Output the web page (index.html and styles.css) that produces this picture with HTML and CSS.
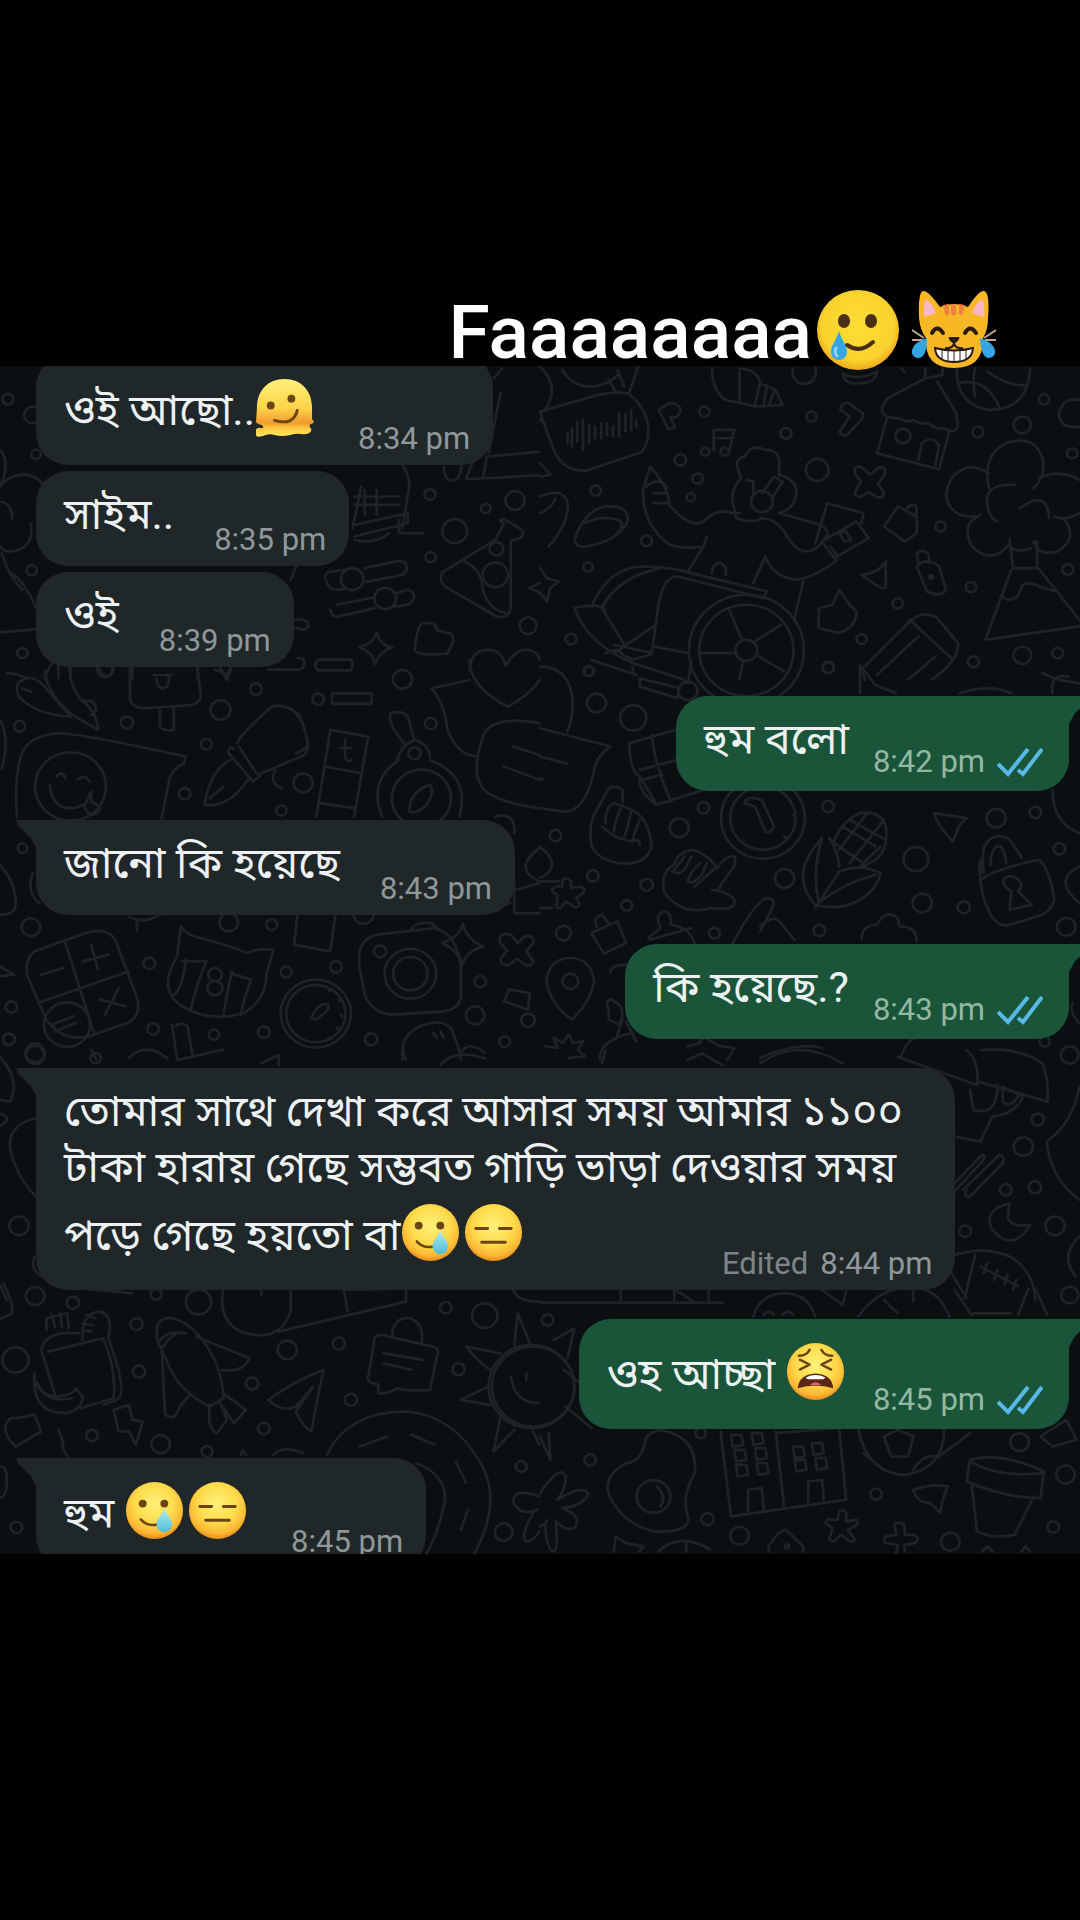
FILE: index.html
```
<!DOCTYPE html>
<html lang="bn">
	<head>
		<meta charset="utf-8">
		<meta name="viewport" content="width=device-width, initial-scale=1">
		<title>Chat</title>
		<link rel="stylesheet" href="styles.css">
	</head>
	<body>
		<!-- Shared emoji and icons -->
		<svg class="defs" aria-hidden="true">
			<defs>
				<radialGradient id="face" cx="50%" cy="38%" r="62%">
					<stop offset="0" stop-color="#fff27a"/>
					<stop offset=".55" stop-color="#fedb4b"/>
					<stop offset=".85" stop-color="#fbb733"/>
					<stop offset="1" stop-color="#e88a1c"/>
				</radialGradient>
				<radialGradient id="flatFace" cx="50%" cy="45%" r="55%">
					<stop offset="0" stop-color="#fdde36"/>
					<stop offset=".8" stop-color="#fad22e"/>
					<stop offset="1" stop-color="#f0a81c"/>
				</radialGradient>
				<linearGradient id="drop" x1="0" y1="0" x2="0" y2="1">
					<stop offset="0" stop-color="#b4ecee"/>
					<stop offset="1" stop-color="#4fbcd8"/>
				</linearGradient>
				<linearGradient id="melt" x1="0" y1="0" x2="0" y2="1">
					<stop offset="0" stop-color="#fff07c"/>
					<stop offset=".5" stop-color="#fdd548"/>
					<stop offset=".76" stop-color="#f29a2e"/>
					<stop offset=".84" stop-color="#fbc53c"/>
					<stop offset="1" stop-color="#ffe861"/>
				</linearGradient>
				<symbol id="tear" viewBox="0 0 60 60">
					<circle cx="30" cy="30" r="29" fill="url(#face)"/>
					<ellipse cx="18" cy="23" rx="4" ry="4" fill="#6b4516"/>
					<ellipse cx="40" cy="23" rx="4" ry="4" fill="#6b4516"/>
					<path d="M16 39Q23 47 34 44" fill="none" stroke="#6b4516" stroke-width="2.5" stroke-linecap="round"/>
					<path d="M40 28C37 35 32 39 32 44a8 8 0 0 0 16 0C48 39 43 35 40 28Z" fill="url(#drop)"/>
				</symbol>
				<symbol id="blank" viewBox="0 0 60 60">
					<circle cx="30" cy="30" r="29" fill="url(#face)"/>
					<path d="M12 26H24M36 26H48M18 40H42" stroke="#6b4516" stroke-width="3" stroke-linecap="round"/>
				</symbol>
				<symbol id="melting" viewBox="0 0 60 60">
					<path d="M2 30C2 13 13 1 30 1s28 12 28 29v12q3 2 1 4-5 1-3 4 2 2 1 4-2 4-10 3-5-1-11 1-9 2-16 0-6-2-12 1-7 2-7-1v-6q3-2 6-1 3-1 0-3-4-1-6-3Z" fill="url(#melt)"/>
					<circle cx="16" cy="28" r="4" fill="#6b4516"/>
					<circle cx="37" cy="21" r="4" fill="#6b4516"/>
					<path d="M20 43Q39 49 43 33" fill="none" stroke="#6b4516" stroke-width="3" stroke-linecap="round"/>
				</symbol>
				<symbol id="tired" viewBox="0 0 60 60">
					<circle cx="30" cy="30" r="29" fill="url(#face)"/>
					<path d="M13 14Q21 14 24 8M36 8Q39 14 47 14M14 18L24 23L14 28M46 18L36 23L46 28" fill="none" stroke="#6b4516" stroke-width="2.5" stroke-linecap="round" stroke-linejoin="round"/>
					<path d="M12 47Q13 33 30 32Q47 33 48 47Q30 42 12 47Z" fill="#5b2713"/>
					<path d="M20 36Q30 31 40 36L38 38H22Z" fill="#fff"/>
					<path d="M24 44Q30 38 36 44Z" fill="#e8636b"/>
				</symbol>
				<symbol id="tearBig" viewBox="0 0 82 80">
					<ellipse cx="41" cy="40" rx="41" ry="40" fill="url(#flatFace)"/>
					<ellipse cx="27" cy="31" rx="6" ry="7" fill="#4a2f16"/>
					<ellipse cx="54" cy="31" rx="6" ry="7" fill="#4a2f16"/>
					<path d="M30 55Q43 64 56 52" fill="none" stroke="#4a2f16" stroke-width="4" stroke-linecap="round"/>
					<path d="M22 41C19 51 14 55 14 62a8 8 0 0 0 16 0C30 55 25 51 22 41Z" fill="#35a5e4"/>
					<path d="M19 58q-2 4 1 8" fill="none" stroke="#8fd2f5" stroke-width="3" stroke-linecap="round"/>
				</symbol>
				<symbol id="cat" viewBox="0 0 84 80">
					<path d="M14 48Q8 40 7 28Q6 2 11 1Q16 0 28 17Q42 11 56 17Q67 0 72 1Q78 2 76 28Q76 40 71 48Q72 78 42 78Q12 78 14 48Z" fill="#f8b826"/>
					<path d="M12 27Q11 14 14 9Q20 13 24 23ZM72 27Q73 14 70 9Q64 13 60 23Z" fill="#f9b5c9"/>
					<path d="M31 15l2 9q3 3 4 0V14ZM39 14v10q3 3 5 0V14ZM47 14v10q3 3 4 0l2-9Z" fill="#ee8140"/>
					<path d="M0 40l12 8M-1 50h12M84 40l-12 8M85 50H73" stroke="#b9a58c" stroke-width="2"/>
					<path d="M20 43q5-9 11 0M53 43q5-9 11 0" fill="none" stroke="#2b1a10" stroke-width="4" stroke-linecap="round"/>
					<path d="M37 47h10q2 2-5 7q-7-5-5-7Z" fill="#2b1a10"/>
					<path d="M42 53q-1 6-9 5M42 53q1 6 9 5" fill="none" stroke="#2b1a10" stroke-width="2"/>
					<path d="M23 58Q42 63 61 58Q60 72 42 72Q24 72 23 58Z" fill="#fff" stroke="#2b1a10" stroke-width="2"/>
					<path d="M30 60v9M36 61v10M42 61v11M48 61v10M54 60v9" stroke="#2b1a10" stroke-width="1"/>
					<path d="M15 48Q15 68 6 68Q-1 67 0 60Q2 52 15 48ZM68 48Q69 68 77 68Q84 67 83 60Q81 52 68 48Z" fill="#35a5e4"/>
				</symbol>
				<symbol id="ticks" viewBox="0 0 46 29">
					<path d="M1 16L11 26L31 1M21 22L26 26L45 1" fill="none" stroke="#58b9e6" stroke-width="4"/>
				</symbol>
			</defs>
		</svg>

		<header class="caption">
			<h1>Faaaaaaaa</h1>
			<svg class="big-emoji" role="img" aria-label="🥲"><use href="#tearBig"/></svg>
			<svg class="big-emoji" role="img" aria-label="😹"><use href="#cat"/></svg>
		</header>

		<main class="chat">
			<!-- Wallpaper doodles -->
			<svg class="wallpaper" viewBox="0 366 1080 1188" preserveAspectRatio="xMidYMin slice" aria-hidden="true">
				<g transform="translate(0 360) scale(.344 .333)">
					<path d="M0 270q20 20 15 60t-20 45M0 380q30-40 80-35 50 10 50 60M0 425q35 5 35 50M90 490q10 80-60 85-20 0-30-15M5 580q20 70 60 110M30 640q40 20 75 105M0 818l105-10M1170 315q20 30 20 65M1050 380l-25 125M1190 375l-20 130M1030 410h130M1030 435h130M1060 390v75M1095 390v75M1030 495l155-35v30l-155 40M1160 480v40h70M1030 540q60 15 100-20M1460 25l-25 30M1455 100l-35 180M1290 320q0 50 35 40 20-20 15-50M1420 290l148-15M1360 358l208-12M1355 355l20-50M1405 350l10-60M945 655q0-20 20-20l40-5M1060 625l100-22q25 0 22 25-3 15-25 20l-90 18M950 665q5 25 30 25l25-3M980 735l105-22M1150 700l35-10q22 5 18 25-3 15-20 20l-45 8M960 750q5 25 25 20l105-25M1440 540l25-50q-20-10 0-12l50 30q10 10 0 25l-30 10v200q-5 35-40 28l-150-90q-22-20-8-45ZM1350 605q50 20 55 90 20 60 70 65M1568 670l-30 15 30 12M1205 870q10-80 25-80 40-5 40 22l40 10q10 5 5 30l-15 30Q1210 890 1205 870ZM1045 863q40-10 50-45 10 40 45 45-35 10-50 50-5-35-45-50ZM780 930h90q15-5 15-20t-20-15M925 900h95q10 15 0 32h-95q-18-15 0-32ZM1365 930q5-60 55-60 40 0 50 50 25-50 60-50 38 5 38 30M860 780q40-5 35 20-5 15-35 5M865 610l-20 50M130 955q30-80 40-35v35M205 915v45M285 915q5 35 30 35 15-5 15-30M385 915v45M575 915v45M625 930l35 15 10-20"/>
					<circle cx="23" cy="117" r="16"/><circle cx="105" cy="283" r="14"/><circle cx="95" cy="165" r="25"/><circle cx="92" cy="632" r="15"/><circle cx="65" cy="880" r="15"/><circle cx="1250" cy="404" r="16"/><circle cx="1497" cy="422" r="28"/><circle cx="1412" cy="446" r="14"/><circle cx="1322" cy="514" r="36"/><circle cx="1252" cy="592" r="15"/><circle cx="1024" cy="658" r="33"/><circle cx="1120" cy="716" r="32"/><circle cx="1443" cy="567" r="20"/><circle cx="1440" cy="645" r="37"/><circle cx="1535" cy="798" r="25"/>
				</g>
				<g transform="translate(540 360) scale(.344 .333)">
					<!-- voice note, shell, key, notes -->
					<path d="M0 20q60 60 15 128M65 30q30 50 80 50t85-40M285 20l-25 78M200 60l20 35M225 30l20 50M0 155l160-48q60-15 100-5 55 50 55 110 0 40-20 65l-160 55q-60 5-90-50Q20 220 0 155M80 220v30M93 205v55M108 185v60M125 180v90M143 195v55M160 200v35M178 190v45M195 190v35M212 200v30M230 160v70M248 165v50M265 150v60M280 180v20M0 180l15 12M0 310l32 35-32 5M500 25q0 70 40 95l90 20 75-5-20-45-45-20q-5-40-60-45M580 35v95M640 65l-15 70M660 75l-10 60M680 95l-15 40M345 150l30-20q35 0 33 25-10 25-30 15l15 32-20 5ZM505 272v-62h60l-15 65M505 235h55M873 150q5-25 25-20l40 30q5 10-5 20l-40 45q-15 5-22-10l30-45ZM735 25q-5 45 35 47 35-5 32-50M880 40q40 25 100-5-5 35-50 35-45 5-50-30M1050 25l10 10"/>
					<!-- house, basketball, bush, volcano -->
					<path d="M1120 55l-110 60q-25 30-10 50 20 10 45 10 20 15 40 5 20 15 45 10 20 20 45 15 30 20 40-5l-5-40-55-95M1010 170l-30 110 180 48 30-115M1100 300l10-50q30-25 50 5l-10 60M1120 25v30l50-10v-20M1212 25q-5 110 95 125 110 0 118-125M1265 25q-10 40 0 85M1300 35q60 45 118 40M1215 70q80-20 120 70M1305 385q-20-100 50-135 90-30 108 55 5 50-30 80M1305 340q-60-40-105 10-45 75 20 115 40 10 60 0M1275 470q-50 20-22 85 55 65 110 0l15 15q30 5 50-5M1435 545q15 45 70 30 60-40 20-95M1450 355q60-30 118 5M1495 470q30 15 73-10M1380 375q-90-5-80 60 5 40 30 50M1395 445q80-60 85 30M1365 540l10 85h70v-80M1370 630l-75 210 273-40M1445 620l123 160M1340 710q45 30 60-30 10-15 40-5 20 10 60 20M1568 120q-50-10-60 45 10 45 60 35"/>
					<!-- person, laptop, rickshaw -->
					<path d="M575 330q-10-35 20-40 20-40 60-20 45 0 40 45v30q55 15 50 60-10 45-50 55M575 325l10 30q-30 30-25 70l10 50q40 15 70 5M600 360l20 5v40M645 400l35-50 25 15-30 50M320 320q60 70 55 115 70 80 105 45 35-35 80-20h20M320 320l-20 70q-5 100 75 165 50 15 100 5l10-30M475 560l-45 75M330 400h40M330 430h40M310 380q30-30 60 0M640 475q50 0 75 50 60 100 120 0 10-25-70-45l-70-20M655 590q20 60 90 70 50-5 120-60M655 590l-35 80M765 665l-25 110M800 550l35-120 105 30-5 30M820 545l100-60 35 50-100 60ZM845 560l20 30M870 520l20-5 15 25-20 5ZM100 745q90-20 90 15M150 740q50-120 150-120 80 0 140 20l220 55-10 20-250-65q-40 0-55 80l-20 150-110-25M180 745q40-90 170-120M180 745l65 110M100 745q40 110 170 165 60 20 150 50M215 880l115-80M190 880q35-20 50 5l30 15 50-15M330 860l100 20M500 640q0-30 25-30 20 10 15 35M550 750l35 85M700 795l-75 50M460 880h105M635 890l75 45M590 905l-10 55"/>
					<circle cx="645" cy="425" r="32"/><circle cx="600" cy="872" r="167"/><circle cx="600" cy="872" r="137"/><circle cx="600" cy="872" r="32"/>
					<!-- small shapes -->
					<path d="M915 325q15-12 30 5l15 15 20-20q30-10 22 20l-20 25 18 30q0 15-20 12l-25-15-25 15q-20-5-12-20l15-28-18-22ZM1000 500l40-60 55 30v50l-35 25ZM1065 455q0-20 25-20 10 10 0 35M935 645q50-5 70-40v80q-15 5-70-40ZM1095 620q30-30 65 0l20 70q-15 25-55 5ZM1100 610l-5-30q20-15 35 5v25M870 690l30 45 20 20q0 50-55 65l-55-15v-60l40-10ZM1080 780q40-30 75-5l60 75q5 50-75 110M1080 780l-145 150 10 30M1075 780l120 115M1100 830l-120 115M1150 890l-80 70M25 560q60-70 55-130-10-50-80-20M0 460q30-10 45-45M100 540q30-90 90-100 70-5 65 45-30 60-120 75-30 5-35-20ZM130 490q50-25 95-10 30 10-10 50M0 625l20 30 35 10-25 20-10 40-20-25"/>
					<circle cx="478" cy="155" r="15"/><circle cx="480" cy="275" r="12"/><circle cx="537" cy="275" r="12"/><circle cx="408" cy="300" r="17"/><circle cx="458" cy="356" r="15"/><circle cx="438" cy="412" r="12"/><circle cx="715" cy="220" r="16"/><circle cx="789" cy="170" r="15"/><circle cx="806" cy="330" r="33"/><circle cx="162" cy="392" r="15"/><circle cx="310" cy="543" r="16"/><circle cx="140" cy="622" r="14"/><circle cx="90" cy="838" r="16"/><circle cx="142" cy="935" r="14"/><circle cx="1055" cy="228" r="22"/><circle cx="1273" cy="216" r="16"/><circle cx="1402" cy="195" r="25"/><circle cx="1465" cy="118" r="15"/><circle cx="1547" cy="280" r="15"/><circle cx="1164" cy="500" r="15"/><circle cx="1137" cy="652" r="5"/><circle cx="1253" cy="682" r="15"/><circle cx="1040" cy="731" r="15"/><circle cx="935" cy="838" r="15"/><circle cx="838" cy="924" r="16"/><circle cx="1260" cy="906" r="16"/><circle cx="1402" cy="887" r="26"/><circle cx="1505" cy="880" r="16"/><circle cx="1534" cy="629" r="16"/>
				</g>
				<g transform="translate(0 660) scale(.344 .333)">
					<!-- carrot, ice cream, sticker, pen, ruler, watch -->
					<path d="M20 40q30 0 60 15 20-5 45 20l80 95q-100-5-150-60-20-45 25-55M65 85l25 10M130 35q10 70 80 130l75 45q-5-60-50-90l35 5q20 30-5 40M235 120q-40-60-30-105M378 20v100q10 25 40 25l140-10q30-10 25-35l-10-80M445 45h55M455 55q0 30 20 30 20-5 15-35M465 150v50q10 15 40 10v-65M640 25l20 35 10-30M50 470q-10-100 10-180 20-65 110-70 60 0 370 70l-5 20q-40 20-45 60l-20 105M145 375q5 70 60 70 20 0 35-10M165 350q15-20 25 5M225 360q20-20 35 5M265 395v30l25 15q0 25-30 25l-15-25ZM690 250q5-25 100-110 40-10 80 25 40 100 15 120l-135 60M695 260l50 80M830 140q30 10 40 35M890 240q20 20-30 40M665 280l70 85 20-15M665 280q-5-20 15-15M670 300q-60 30-75 135 70 10 125-75M610 415l40-35M800 330q-20 40 20 55M960 210l110 20-40 240M960 210l-40 260M945 320l105 20M930 430l100 15M990 265h30M1003 240v50q5 20 20 10M1175 250q-50-60-40-90 35-10 50 10l20 70M1155 300q10-45 50-60 40 10 45 50M1190 455q0-60 60-80 15 20-10 60-30 30-50 20ZM1160 300q-90 60-50 170M1250 300q120 50 85 170M1365 0q0 80 110 140 60-30 93-80M1365 60l-110 25q40 50 45 120 25 80 90 85M1568 190q-130-25-160 30-50 130 10 180 50 30 150 45M1490 260l78 25M1465 320l103 40M0 180q30 60 5 145M965 100h115v32H965ZM0 615q50 60 45 120 0 30-45 30M95 640q-20 60 20 90M865 760l-10 95 105 20 15-110M375 770q40 25 90-5M398 785v30M1445 755q-20-5 40-25M1440 470q60-15 55 50M1495 670v90h73M1500 690l68-20M1568 565q-80 60 0 100"/>
					<!-- calculator, cat cup, camera, stopwatch -->
					<path d="M80 950q-10-50 20-75l150-55q60-20 85 20l65 180q10 50-30 70l-110 40q-75 20-125-50ZM190 850l85 275M110 1030l265-95M120 945l65-20M240 905l75-20M265 855l20 75M290 1020l75 20M345 985l-40 80M150 1095l65-25M160 1115l60-25M525 800l-10 90q-60 100 15 150 80 50 180 20 65-40 65-120l20-70q-50-5-75 10-90-35-140-45-40-10-55-35ZM500 1010q30-15 40-110M530 905h70q-30 70-45 145M670 940l60 20q-20 50-30 105M650 1065q10-70 25-130M1045 920q-10-80 50-95l170-20q65 20 75 120v90q-10 35-50 40l-150 10q-60-5-80-60ZM1195 810q10-25 60-20l20 20M1285 850q55-20 60-60 10 50 60 70-50 15-60 55-10-40-60-65M905 1075q20-50 50-40 5 20-40 45ZM955 990l5 5M985 1020l5 5M990 1065l5 5M980 1105l5 5M955 1135l5 5M510 1100q15-15 35 0l15 90M500 1095l15 105M375 1195q50-50 110 0M520 1200l130-30M1180 1200q-30-60 40-100 60-25 90 5 20 40 30 95M1260 1120l10 15M1280 1115l10 20M1340 1180q20-40 70 0M1480 990l60 10-5 50-70-25ZM1455 830q20-15 35 0l15 20 20-20q30-5 25 20l-20 25 20 28q-5 20-25 12l-22-18-25 20q-25 0-22-20l18-25-22-25ZM0 920l40 25-40 5M265 1170l15 30"/>
					<circle cx="205" cy="380" r="103"/><circle cx="1225" cy="415" r="86"/><circle cx="1205" cy="280" r="18"/><circle cx="195" cy="1095" r="67"/><circle cx="625" cy="945" r="20"/><circle cx="625" cy="985" r="22"/><circle cx="1193" cy="942" r="75"/><circle cx="1193" cy="942" r="50"/><circle cx="1105" cy="875" r="18"/><circle cx="918" cy="1062" r="102"/><circle cx="918" cy="1062" r="86"/>
					<circle cx="57" cy="199" r="16"/><circle cx="305" cy="30" r="22"/><circle cx="369" cy="188" r="18"/><circle cx="641" cy="150" r="29"/><circle cx="744" cy="87" r="17"/><circle cx="600" cy="253" r="16"/><circle cx="537" cy="402" r="17"/><circle cx="881" cy="369" r="28"/><circle cx="925" cy="118" r="17"/><circle cx="1170" cy="58" r="28"/><circle cx="1252" cy="191" r="17"/><circle cx="818" cy="452" r="15"/><circle cx="65" cy="565" r="14"/><circle cx="90" cy="802" r="27"/><circle cx="434" cy="911" r="17"/><circle cx="665" cy="788" r="27"/><circle cx="790" cy="795" r="16"/><circle cx="832" cy="937" r="16"/><circle cx="977" cy="922" r="17"/><circle cx="1057" cy="762" r="30"/><circle cx="1396" cy="966" r="17"/><circle cx="1381" cy="1067" r="27"/><circle cx="1535" cy="1082" r="20"/><circle cx="1467" cy="1146" r="16"/><circle cx="1079" cy="1139" r="18"/><circle cx="767" cy="1118" r="17"/><circle cx="622" cy="1125" r="15"/><circle cx="445" cy="1108" r="17"/><circle cx="33" cy="1042" r="17"/><circle cx="26" cy="1139" r="17"/><circle cx="102" cy="1180" r="28"/>
				</g>
				<g transform="translate(540 660) scale(.344 .333)">
					<path d="M0 20q90 0 95 110 0 50-15 85M0 205l205 55q-45 30-50 80-25 120-90 115L0 445M0 290l80 22M0 355l10 2M150 0l130 45M290 55l115 30-5 30-110-35ZM270 20v20M440 0l-10 70M930 70v-55l45 60 60 25M930 100V40M1220 100q90-30 150 0M1460 40l50 20 58 10M1490 100q-10-60 45-50M260 250l150-45M260 250q0 80 30 100l50 85 135-45M325 225q10 90 30 120M290 330l110-30M300 360l50-15 30 80M290 350q-5 50 50 85"/>
					<!-- hands, clock, corn, lock -->
					<path d="M150 560q-10-60 10-100l40-75q20-10 40 5v35M190 490q0-50 25-60 20 5 50 20 50 20 60 110-20 60-95 50-60-10-80-50M180 500q40 40 90 45 20-10 20 10M265 450q-10 60-20 80M240 435q-20 40-25 80M290 480q-15 35-20 60M595 430q5-20 30-15l20 5 35 80q-5 20-25 15l-30-75ZM710 400l5 10M735 465h5M710 530l5 5M390 615q10-40 55-45 30 10 55 35l15 20q25-40 50-35 10 20-15 50l-30 45M390 615q-40 20-30 80 50 75 140 50 70 10 65-25-20-25-65-30M420 590q-20 30-35 45 25 15 40-15l15-30M465 610q-35 35-35 55 15 10 40-20l15-35M510 625q-40 35-60 55M820 535q-100 110-20 200 70 20 130-15 50-30 60-80-60-30-120-5l-70 110M820 535q-30 100-10 190M870 620q-5-50-30-85l15 10q20-60 75-85 60-10 75 40 10 70-30 100l-35 20M880 500l95 60M900 480l105 60M855 550l85 60M1000 480l-100 130M950 460l-80 110M990 560l-60 60M975 645q-90 25-160 80M1290 640q-5-50 0-75 20-50 70-30 25 30 40 60M1310 615q0-60 30-55 10 10 15 50M1280 660q50-35 170-60 30 20 45 120-10 40-50 50l-80 25q-30 10-55-30-40-80-30-165ZM1365 750l5-55q-30-20-20-40 25-15 45 10 10 15-5 30l40 40ZM1145 460l95 15-20 20-20 50q-40-40-55-85ZM1490 390q0 100 78 130M1568 620q-80 40 0 110"/>
					<!-- gloves, cloud, flowers, pins -->
					<path d="M0 560q70 60 0 95M0 665h55M0 745h35M65 660q15-10 25 5v20l25-5q20 5 10 20l-20 15 10 20q-10 15-25 0l-15-10-15 20q-20 0-10-20v-20l-15-10q0-15 20-15h10ZM150 820l75-35 25 65-65 32ZM165 800q-10-30 15-35l20 25M315 835l35-30q-20-45 15-50 20 10 15 40 60 10 70 60M320 840l120-35M560 850q70-130 100-135 35 0 5 50l-25 50M640 800q40-40 60-10l40 50M935 840q0-45 45-45 25-50 60-20l5 25q50 0 50 45M18 965q10-70 70-70t70 70q-10 60-65 115-60-40-75-115ZM205 940q-5-25 50-25M200 1050q-15-30 10-30l25 20q10 30-5 55l-30-15ZM270 1120q-100 20-95 80M240 1080l-20 60M250 1085l30 60M15 1160l35 5-10-30 25 15 20-25 10 25 30-5-15 25 20 20-45 5M430 1160l35-10 10-20q30 20 50 30l40 5-20 35M640 1195q110-50 180-30M1050 1190q20-60 60-60M1568 1090q-30-30-20-60"/>
					<circle cx="648" cy="475" r="122"/><circle cx="648" cy="475" r="95"/><circle cx="88" cy="965" r="23"/><circle cx="430" cy="93" r="28"/>
					<circle cx="142" cy="33" r="15"/><circle cx="164" cy="129" r="28"/><circle cx="271" cy="174" r="38"/><circle cx="838" cy="22" r="17"/><circle cx="475" cy="444" r="17"/><circle cx="405" cy="504" r="28"/><circle cx="45" cy="527" r="17"/><circle cx="154" cy="648" r="17"/><circle cx="310" cy="675" r="18"/><circle cx="252" cy="737" r="16"/><circle cx="68" cy="820" r="22"/><circle cx="507" cy="820" r="16"/><circle cx="711" cy="656" r="28"/><circle cx="838" cy="440" r="17"/><circle cx="1093" cy="598" r="36"/><circle cx="1111" cy="730" r="28"/><circle cx="1232" cy="743" r="18"/><circle cx="1326" cy="475" r="28"/><circle cx="1440" cy="458" r="17"/><circle cx="1510" cy="567" r="17"/><circle cx="1530" cy="801" r="27"/><circle cx="812" cy="812" r="17"/><circle cx="1467" cy="1146" r="15"/>
				</g>
				<g transform="translate(0 1050) scale(.344 .333)">
					<path d="M0 20q60 70 30 135l-30-5M0 190q40 15 0 38M100 205q-100 30-60 130 20 60 65 105M100 620q-20 60 70 75l180 30M0 705l20 45M760 40l50-25v30M1170 0v30M1280 45q40-50 130-20"/>
					<circle cx="55" cy="528" r="28"/><circle cx="102" cy="15" r="27"/><circle cx="278" cy="25" r="15"/>
				</g>
				<g transform="translate(540 1050) scale(.344 .333)">
					<path d="M1040 20l230 85q10-70-30-105M1280 0q110-10 180 40 20 50 15 115l-200-60M1250 120l10 60q70 20 70-75M1345 155v-45l60 30q-20 50-90 60l-35 75-75-15M1350 160q20 10 40-20M1568 110q-20 110-95 165 10 110 95 175M1205 400l80-85q15 0 0 20l-80 90M1230 420l105-105q20 5 10 25l-95 100q-20 5-10-20M1365 460q-80 20-50 80 60 70 110-15-50 10-65-20ZM1195 620q90-35 170 0 70 40 75 130M1190 660l50 85M1265 615l-30 130M1280 650l110 60M1300 640l-10 30M1330 660l-10 30M1360 675l-10 30M1385 690l-10 30M1568 560q-60 60-10 120M180 40q10-30 10-40M430 30l40-20 60 35M640 40q110-80 240 0"/>
					<circle cx="1540" cy="15" r="26"/><circle cx="1447" cy="209" r="18"/><circle cx="1405" cy="290" r="28"/><circle cx="1354" cy="420" r="17"/><circle cx="1439" cy="412" r="18"/><circle cx="1497" cy="528" r="28"/><circle cx="1236" cy="544" r="17"/>
				</g>
				<g transform="translate(0 1280) scale(.344 .333)">
					<!-- jar, rocket, plane, bag, sun, planet -->
					<path d="M10 10q30 60 25 90l-35 18M240 25l145 15M650 20q-20 100 50 135 110 40 145-60V20M760 25v20M1000 30l10 65M1000 30l180-5v40M810 155l370-90M1490 25q10 40 78 40M120 210q10-60 110-50M120 210l40 135M140 215l160-40q40 100 30 180l-95 30M315 175q60 170 25 185l-40 15M135 150v-35l60-15 5 45M150 105l10 35M175 100l5 40M240 180q-5-80 50-85 40 10 25 80M250 105l25 10M240 130l30 5M240 150l25 5M100 280q-10 120 90 120 50-10 50-50l-20-25q0 20-60 25-60-10-60-70ZM110 310q20 60 100 45M460 190q-20-80 40-75 80 20 130 140 20 60 20 100l-40 25q-100-50-130-150ZM460 190q20-40 75-30M475 200q30-50 65-40M570 170l155 65q-20 45-80 35M470 200l10 205q30 20 40-20l30-40M610 375q-10 70 20 85l30-40-20-50M640 370l40 60 35-40-60-45M780 360q80-60 160-90-20 100-35 185-30-20-45-60l50-75-50 60q-40 20-80-20ZM1090 170q20-10 40 0l130 30q20 10 10 30l-20 100q-70 5-95-5-30 20-55 15v-25q-35-10-30-20ZM1140 170q0-60 55-55 40 20 30 75M1115 220l115 20M1115 250l80 20M1540 190l-35-90-10 95M1455 220l-100-20q30 40 70 70M1420 320l-80 40 85 15M1455 410l-20 105 60-65M1550 455l18 40M1485 290q10 80 83 80M1530 280v20M950 525q60-130 230-130 140 10 220 160 60 110-20 265M1045 500l80-30M1195 465l70 30M1325 545l30 65M1360 690l-20 60M1210 550q100 40 80 130-20 90-50 140M15 440q10-30 30-25l55-10 20 50-75 45q-30-30-30-60ZM330 390l45-15 10 45 30 5-20 70-20-40h-30ZM170 450l15 40-5 10 15 30M700 525l5-15 10 15M795 525q30-30 85-5M0 560q20 0 20 40 0 50-20 55M1568 650q-80-30-75 20 20 40 70 20M1550 700q-40 70-20 85 20 0 38-30"/>
					<circle cx="1545" cy="320" r="125"/>
					<circle cx="45" cy="240" r="38"/><circle cx="102" cy="48" r="27"/><circle cx="212" cy="68" r="18"/><circle cx="454" cy="43" r="16"/><circle cx="577" cy="66" r="37"/><circle cx="397" cy="133" r="18"/><circle cx="404" cy="275" r="18"/><circle cx="835" cy="210" r="28"/><circle cx="985" cy="191" r="18"/><circle cx="733" cy="311" r="18"/><circle cx="1020" cy="360" r="18"/><circle cx="767" cy="446" r="17"/><circle cx="467" cy="493" r="27"/><circle cx="267" cy="467" r="17"/><circle cx="602" cy="515" r="16"/><circle cx="1296" cy="83" r="17"/><circle cx="1409" cy="107" r="37"/><circle cx="1333" cy="268" r="18"/><circle cx="1515" cy="560" r="16"/><circle cx="1464" cy="757" r="26"/><circle cx="48" cy="743" r="17"/>
				</g>
				<g transform="translate(540 1280) scale(.344 .333)">
					<!-- egg, buildings, football, pot, flowers -->
					<path d="M0 68h530M235 25v43M390 30v38M490 30v38M390 30q40 20 55 35M620 110q20-70 90-70t90 70M650 105q15-20 30 0M705 105q15-20 30 0M820 30l60 45 10-40M925 110q60-90 165-90 70 10 100 90M1000 60l40 40M1085 25v40M1205 30l50 75M1420 25l-30 80M1440 25l35 80M1260 100h110M40 180l60-35-20 90M70 270l60 50M75 380l75 65M0 470l30 70-5-80M350 450q110 20 100 130-40 70-20 130 10 50-100 45-80-20-120-90-40-70 40-115 40 0 55-60 0-30 45-40ZM340 620q30 30 10 60M525 455l30 255 335-50-20-210M685 455l25 230M690 460l170-15M605 695v-65l40-5 5 65M780 665v-60l40-5 5 60M555 465h30l5 30-30 5ZM565 510h30l5 30-30 5ZM570 555h30l5 30-30 5ZM615 460h30l5 30-30 5ZM625 505h30l5 30-30 5ZM630 550h30l5 30-30 5ZM735 500h30l5 30-30 5ZM740 540h30l5 30-30 5ZM790 490h30l5 30-30 5ZM800 535h30l5 30-30 5ZM925 450q30 135 140 135 110-20 110-135M1000 470l40-20 45 20-15 60h-50ZM940 520l60 50M1085 570q30-50 75-40l90-70M1240 605l10-65q90-25 215 35l-10 80q-100 0-215-50ZM1250 545q80 50 215 35M1255 620q10 80 15 135 50 25 110 10l55-115M1455 470l75-50 30 60-70 20ZM1085 630q60-20 100-10-20 50-20 80l-30-30q-40 0-50-40ZM0 640q60-90 75-50 0 40-25 70 80-50 90-15-20 35-75 40 60 25 35 60-25 10-55-20 10 80-5 90-20 0-25-80M0 740q20-10 20-20M870 695q15-10 20 5v25l30-5q10 10-5 20l-20 10 20 30q-10 10-20 0l-20-15-20 20q-20 0-10-20l5-20-20-15q0-15 15-10h20ZM1035 730q20-5 25 10v25h30q15 15 0 25l-30 5v20M1035 730q-10 10 0 25v10l-30 5q-10 15 0 20l35 5-5 25M665 800q30-50 50-50 30 30 50 50v15M665 800v15M215 815l5-45 30 20 50 10-10 15M345 815q60-60 150-5M425 785v30M1285 815l15-15 15 15M1400 815l10-15 15 15"/>
					<circle cx="-20" cy="320" r="120"/><circle cx="330" cy="650" r="49"/>
					<circle cx="22" cy="120" r="17"/><circle cx="146" cy="540" r="17"/><circle cx="467" cy="460" r="15"/><circle cx="487" cy="718" r="18"/><circle cx="580" cy="768" r="27"/><circle cx="718" cy="800" r="6"/><circle cx="977" cy="643" r="17"/><circle cx="1193" cy="786" r="27"/><circle cx="1394" cy="487" r="27"/><circle cx="1528" cy="584" r="27"/><circle cx="1492" cy="742" r="17"/><circle cx="1540" cy="45" r="25"/>
				</g>
			</svg>

			<article class="bubble in">
				<p>ওই আছো..<svg class="emoji" role="img" aria-label="🫠"><use href="#melting"/></svg></p>
				<footer><time>8:34 pm</time></footer>
			</article>
			<article class="bubble in">
				<p>সাইম..</p>
				<footer><time>8:35 pm</time></footer>
			</article>
			<article class="bubble in">
				<p>ওই</p>
				<footer><time>8:39 pm</time></footer>
			</article>
			<article class="bubble out tail">
				<p>হুম বলো</p>
				<footer><time>8:42 pm</time><svg class="ticks" role="img" aria-label="Read"><use href="#ticks"/></svg></footer>
			</article>
			<article class="bubble in tail">
				<p>জানো কি হয়েছে</p>
				<footer><time>8:43 pm</time></footer>
			</article>
			<article class="bubble out tail">
				<p>কি হয়েছে.?</p>
				<footer><time>8:43 pm</time><svg class="ticks" role="img" aria-label="Read"><use href="#ticks"/></svg></footer>
			</article>
			<article class="bubble in tail long">
				<p>তোমার সাথে দেখা করে আসার সময় আমার ১১০০<br>টাকা হারায় গেছে সম্ভবত গাড়ি ভাড়া দেওয়ার সময়<br>পড়ে গেছে হয়তো বা<svg class="emoji" role="img" aria-label="🥲"><use href="#tear"/></svg><svg class="emoji" role="img" aria-label="😑"><use href="#blank"/></svg></p>
				<footer><span class="edited">Edited</span><time>8:44 pm</time></footer>
			</article>
			<article class="bubble out tail">
				<p>ওহ আচ্ছা <svg class="emoji" role="img" aria-label="😫"><use href="#tired"/></svg></p>
				<footer><time>8:45 pm</time><svg class="ticks" role="img" aria-label="Read"><use href="#ticks"/></svg></footer>
			</article>
			<article class="bubble in tail">
				<p>হুম <svg class="emoji" role="img" aria-label="🥲"><use href="#tear"/></svg><svg class="emoji" role="img" aria-label="😑"><use href="#blank"/></svg></p>
				<footer><time>8:45 pm</time></footer>
			</article>
		</main>
	</body>
</html>
```
FILE: styles.css
```
*{
	box-sizing: border-box;
}
body{
	margin: 0;
	background: #000000;
	color: #edf1f2;
	font-family: Roboto, "Noto Sans", "Noto Sans Bengali", sans-serif;
}
.defs{
	position: absolute;
	width: 0;
	height: 0;
}

/* Caption over the chat */
.caption{
	position: relative;
	z-index: 1;
	display: flex;
	justify-content: flex-end;
	align-items: flex-end;
	gap: 12px;
	height: 370px;
	margin-bottom: -4px;
	padding-right: 84px;
}
h1{
	margin: 0 -8px 0 0;
	color: #ffffff;
	font-size: 75px;
	font-weight: 500;
	line-height: 76px;
}
.big-emoji{
	width: 84px;
	height: 80px;
}

/* Chat panel, cut off at top and bottom */
.chat{
	position: relative;
	display: flex;
	flex-direction: column;
	align-items: flex-start;
	gap: 6px;
	height: 1188px;
	padding: 0 11px 0 36px;
	overflow: hidden;
	background: #0b0f12;
}
.wallpaper{
	position: absolute;
	top: 0;
	left: 0;
	width: 100%;
	height: 100%;
	fill: none;
	stroke: #1e2326;
	stroke-linejoin: round;
	stroke-linecap: round;
}
.wallpaper path,
.wallpaper circle{
	stroke-width: 8px;
}
.bubble{
	position: relative;
	flex-shrink: 0;
	display: flex;
	align-items: flex-end;
	gap: 40px;
	padding: 15px 23px 24px 28px;
	border-radius: 32px;
	background: #1f2729;
}
.bubble:first-of-type{
	margin-top: -11px;
}
.tail{
	margin-top: 23px;
}
.in.tail{
	border-top-left-radius: 0;
}
.tail::before{
	content: "";
	position: absolute;
	top: 0;
	width: 21px;
	height: 30px;
	background: inherit;
}
.in.tail::before{
	left: -20px;
	clip-path: polygon(0 0, 100% 0, 100% 100%, 70% 60%, 10% 20%);
}
.out{
	align-self: flex-end;
	gap: 24px;
	padding-right: 26px;
	background: #1a5539;
}
.out.tail{
	border-top-right-radius: 0;
}
.out.tail::before{
	right: -20px;
	clip-path: polygon(0 0, 100% 0, 90% 20%, 30% 60%, 0 100%);
}
.bubble p{
	margin: 0;
	font-size: 43px;
	line-height: 56px;
}
.emoji{
	width: 59px;
	height: 59px;
	margin: 8px 4px 4px 0;
	vertical-align: -16px;
}
.bubble footer{
	display: flex;
	align-items: center;
	gap: 12px;
	height: 36px;
	margin-bottom: -16px;
	color: #8f979a;
	font-size: 31px;
	line-height: 36px;
}
.edited{
	color: #7d8588;
}
.bubble.out footer{
	margin-bottom: -13px;
	color: #93b8a2;
}
.ticks{
	width: 46px;
	height: 29px;
}
.long{
	flex-direction: column;
	align-items: stretch;
	gap: 0;
	width: 89%;
}
.bubble.long footer{
	justify-content: flex-end;
	margin-top: -20px;
}
```
